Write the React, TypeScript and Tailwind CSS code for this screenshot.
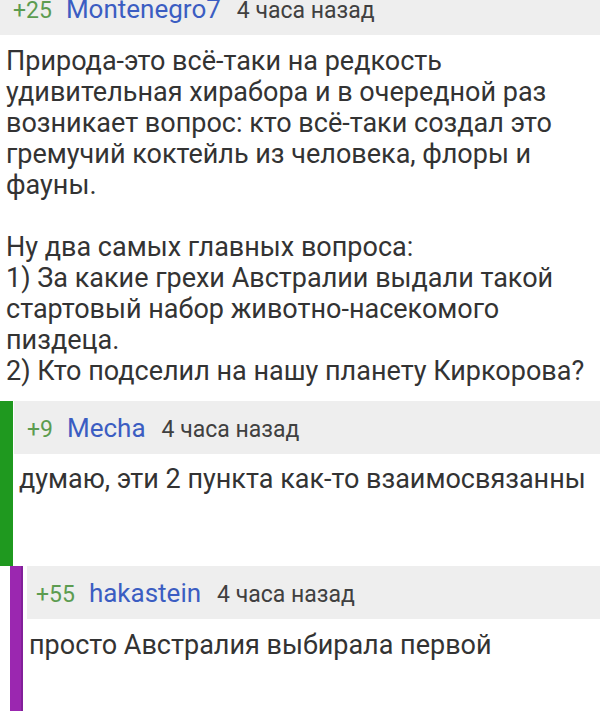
import React from "react";

function Header({ score, name, pad }: { score: string; name: string; pad: string }) {
  return (
    <div className={`flex items-center h-[53px] bg-[#eeeeee] ${pad}`}>
      <div className="flex items-baseline leading-none">
        <span className="text-[23px] text-[#5c9c50]">{score}</span>
        <span className="ml-[14px] text-[26px] text-[#3b5dc2]">{name}</span>
        <span className="ml-[16px] text-[23px] text-[#404040]">4 часа назад</span>
      </div>
    </div>
  );
}

export default function App() {
  return (
    <div
      className="w-[600px] h-[711px] overflow-hidden bg-white text-[#333333]"
      style={{ fontFamily: "Roboto, 'Noto Sans', sans-serif" }}
    >
      <div className="-mt-[18px]">
        <Header score="+25" name="Montenegro7" pad="pl-[13px]" />
      </div>
      <div className="pl-[6px] pt-[11px] pb-[14px] text-[27px] leading-[31px] whitespace-nowrap">
        <p>
          Природа-это всё-таки на редкость
          <br />
          удивительная хирабора и в очередной раз
          <br />
          возникает вопрос: кто всё-таки создал это
          <br />
          гремучий коктейль из человека, флоры и
          <br />
          фауны.
        </p>
        <p className="mt-[31px]">Ну два самых главных вопроса:</p>
        <p>
          1) За какие грехи Австралии выдали такой
          <br />
          стартовый набор животно-насекомого
          <br />
          пиздеца.
        </p>
        <p>2) Кто подселил на нашу планету Киркорова?</p>
      </div>
      <div className="flex h-[165px]">
        <div className="w-[13px] bg-[#1f991f]" />
        <div className="flex-1 pl-[1px]">
          <Header score="+9" name="Mecha" pad="pl-[13px]" />
          <p className="pl-[5px] pt-[10px] text-[27px] leading-[31px] whitespace-nowrap">
            думаю, эти 2 пункта как-то взаимосвязанны
          </p>
        </div>
      </div>
      <div className="flex ml-[10px] h-[160px]">
        <div className="w-[13px] bg-[#9b27b0] border-r-[2px] border-[#82209a]" />
        <div className="flex-1 pl-[4px]">
          <Header score="+55" name="hakastein" pad="pl-[9px]" />
          <p className="pl-[2px] pt-[11px] text-[27px] leading-[31px] whitespace-nowrap">
            просто Австралия выбирала первой
          </p>
        </div>
      </div>
    </div>
  );
}
